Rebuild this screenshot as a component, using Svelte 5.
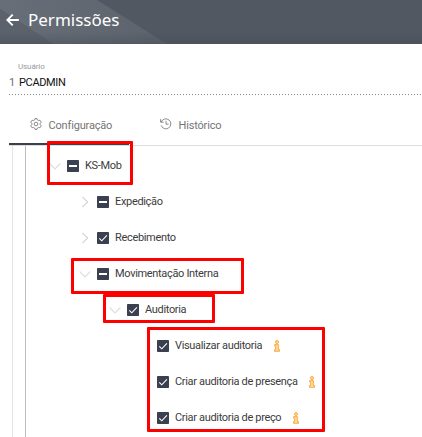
<script>
  const rows = [
    { label: 'KS-Mob', level: 0, arrow: 'down', state: 'partial' },
    { label: 'Expedição', level: 1, arrow: 'right', state: 'partial' },
    { label: 'Recebimento', level: 1, arrow: 'right', state: 'checked' },
    { label: 'Movimentação Interna', level: 1, arrow: 'down', state: 'partial' },
    { label: 'Auditoria', level: 2, arrow: 'down', state: 'checked' },
    { label: 'Visualizar auditoria', level: 3, state: 'checked', info: true },
    { label: 'Criar auditoria de presença', level: 3, state: 'checked', info: true },
    { label: 'Criar auditoria de preço', level: 3, state: 'checked', info: true }
  ];
</script>

<div class="page">
  <header>
    <svg class="shine" width="422" height="44" viewBox="0 0 422 44">
      <defs>
        <linearGradient id="band" x1="0" y1="0" x2="1" y2="0">
          <stop offset="0" stop-color="#686e78" />
          <stop offset="1" stop-color="#5c636d" />
        </linearGradient>
        <linearGradient id="shade" x1="0" y1="0" x2="0" y2="1">
          <stop offset="0" stop-color="#454c57" stop-opacity="0" />
          <stop offset="1" stop-color="#454c57" stop-opacity=".45" />
        </linearGradient>
      </defs>
      <path d="M0 0H97L167 44H53L0 9Z" fill="url(#band)" />
      <path d="M0 9L53 44H0Z" fill="#5b626c" />
      <rect y="32" width="422" height="12" fill="url(#shade)" />
    </svg>
    <svg class="back" width="13" height="12" viewBox="0 0 13 12" fill="none" stroke="#fff" stroke-width="1.9">
      <path d="M12.8 6H1.5M6.7 .7L1.4 6L6.7 11.3" />
    </svg>
    <h1>Permissões</h1>
  </header>

  <section class="field">
    <div class="caption">Usuário</div>
    <div class="value"><span class="code">1</span><span class="user">PCADMIN</span></div>
  </section>

  <nav>
    <div class="tab active">
      <svg width="12" height="12" viewBox="0 0 12 12" fill="none" stroke="#777" stroke-width=".85" stroke-linejoin="round">
        <path d="M5 .6H7L7.4 2L8.5 2.6L9.9 2.2L11.2 4.2L10.2 5.3V6.7L11.2 7.8L9.9 9.8L8.5 9.4L7.4 10L7 11.4H5L4.6 10L3.5 9.4L2.1 9.8L.8 7.8L1.8 6.7V5.3L.8 4.2L2.1 2.2L3.5 2.6L4.6 2Z" />
        <circle cx="6" cy="6" r="1.8" />
      </svg>
      <span>Configuração</span>
    </div>
    <div class="tab">
      <svg width="12" height="12" viewBox="0 0 12 12" fill="none" stroke="#777" stroke-width=".85">
        <path d="M1.2 4A5 5 0 1 1 1.1 7.4M.6 1.1V4.2H3.6M6 2.8V6.2H8.7" />
      </svg>
      <span>Histórico</span>
    </div>
  </nav>

  <main>
    <div class="rail"></div>
    <div class="tree">
      {#each rows as row}
        <div class="row level{row.level}">
          <span class="arrow">
            {#if row.arrow === 'down'}
              <svg width="12" height="12" viewBox="0 0 12 12" fill="none" stroke="#ddd" stroke-width="1.1"><path d="M.6 3.5L6 9L11.4 3.5" /></svg>
            {:else if row.arrow === 'right'}
              <svg width="12" height="12" viewBox="0 0 12 12" fill="none" stroke="#d3d3d3" stroke-width="1.1"><path d="M3.3 .9L8.7 6L3.3 11.1" /></svg>
            {/if}
          </span>
          <svg class="box" width="12" height="12" viewBox="0 0 12 12" fill="none" stroke="#fff">
            <rect width="12" height="12" rx=".8" fill="#3b4050" stroke="none" />
            {#if row.state === 'partial'}
              <path d="M2 6H10" stroke-width="2" />
            {:else}
              <path d="M2.3 6.3L4.8 8.8L9.9 3.3" stroke-width="1.1" />
            {/if}
          </svg>
          <span class="label">{row.label}</span>
          {#if row.info}
            <svg class="info" width="6" height="12" viewBox="0 0 6 12" fill="#ffdfaa" stroke="#faa32c" stroke-width=".9">
              <circle cx="3" cy="2" r="1.5" />
              <path d="M.7 4.6H4.3V9.6H5.5V11.3H.5V9.6H1.7V6.1H.7Z" />
            </svg>
          {/if}
        </div>
      {/each}
    </div>
  </main>

  <div class="mark root"></div>
  <div class="mark internal"></div>
  <div class="mark audit"></div>
  <div class="mark leaves"></div>
</div>

<style>
  .page { position: relative; width: 422px; height: 437px; overflow: hidden; display: flex; flex-direction: column; background: #fff; font-family: Roboto, "Liberation Sans", sans-serif; font-size: 11px; color: #3c3c3c; }
  header { position: relative; height: 44px; flex: none; display: flex; align-items: center; box-sizing: border-box; padding: 0 0 4px 6px; background: #515861; }
  .shine { position: absolute; left: 0; top: 0; }
  .back { position: relative; flex: none; }
  h1 { position: relative; margin: 0 0 0 9px; font: 400 17px/24px "Noto Sans", sans-serif; color: #fff; white-space: nowrap; }
  .field { height: 51px; flex: none; margin-left: 9px; padding-top: 16px; box-sizing: border-box; }
  .caption { margin-left: 9px; height: 14px; font-size: 8px; line-height: 13px; color: #999; letter-spacing: -.1px; }
  .field::after { content: ""; display: block; height: 1px; margin-top: 4px; background: repeating-linear-gradient(90deg, #888 0 1px, transparent 1px 3px); }
  .value { display: flex; height: 16px; line-height: 18px; }
  .code { width: 10px; color: #66707e; }
  .user { color: #111; letter-spacing: -.35px; }
  nav { height: 50px; flex: none; margin-left: 9px; display: flex; border-bottom: 1px solid #ddd; }
  .tab { display: flex; align-items: center; box-sizing: border-box; width: 120px; height: 50px; padding: 12px 0 0 21px; color: #757575; font-size: 11px; letter-spacing: -.17px; }
  .tab + .tab { margin-left: 10px; padding-top: 10px; }
  .tab svg { flex: none; margin-bottom: 3px; }
  .tab span { margin-left: 6.5px; }
  .active { border-bottom: 2px solid #3b4050; }
  main { flex: 1; display: flex; margin-left: 12px; border-left: 1px solid #e5e5e5; }
  .rail { width: 12px; border-right: 1px solid #bdbdbd; flex: none; }
  .tree { padding: 2px 0 0 23px; }
  .row { height: 36px; display: flex; align-items: center; white-space: nowrap; }
  .level1 { padding-left: 30px; }
  .level2 { padding-left: 60px; }
  .level3 { padding-left: 90px; }
  .arrow { width: 18px; height: 12px; display: flex; flex: none; }
  .box { flex: none; }
  .label { margin: 0 0 2px 6px; letter-spacing: -.33px; }
  .info { margin: 0 0 1px 11.5px; }
  .mark { position: absolute; box-sizing: border-box; border: 3px solid #f00; border-radius: 1px; }
  .root { left: 47px; top: 141px; width: 86px; height: 44px; }
  .internal { left: 71px; top: 258px; width: 173px; height: 36px; }
  .audit { left: 103px; top: 294px; width: 112px; height: 29px; }
  .leaves { left: 147px; top: 327px; width: 178px; height: 105px; }
</style>
